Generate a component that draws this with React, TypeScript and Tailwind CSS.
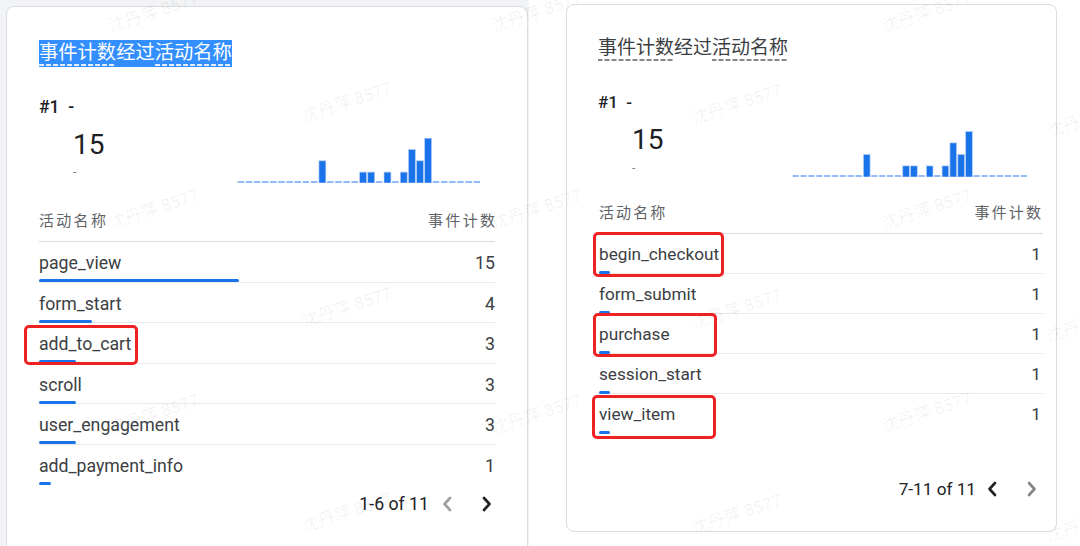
import React from "react";

type Row = { name: string; value: number; bar: number };

function Spark({ w, h, unit, values }: { w: number; h: number; unit: number; values: Record<number, number> }) {
  const slots = 30;
  const sw = w / slots;
  return (
    <svg width={w} height={h} className="block">
      {Array.from({ length: slots }).map((_, i) => {
        const v = values[i] || 0;
        const x = i * sw;
        if (!v) return <rect key={i} x={x + 0.6} y={h - 1.8} width={sw - 1.6} height={1.6} fill="#7baaf7" />;
        const bh = v * unit;
        return (
          <rect key={i} x={x + 0.6} y={h - bh + 0.4} width={sw - 1.2} height={bh - 0.4} fill="#1a73e8" stroke="#b3cefb" strokeWidth={0.7} />
        );
      })}
    </svg>
  );
}

function ChevLeft({ color }: { color: string }) {
  return (
    <svg width="10" height="16" viewBox="0 0 10 16" className="block">
      <polyline points="8,2 2.5,8 8,14" fill="none" stroke={color} strokeWidth="2.6" strokeLinecap="round" strokeLinejoin="round" />
    </svg>
  );
}
function ChevRight({ color }: { color: string }) {
  return (
    <svg width="10" height="16" viewBox="0 0 10 16" className="block">
      <polyline points="2,2 7.5,8 2,14" fill="none" stroke={color} strokeWidth="2.6" strokeLinecap="round" strokeLinejoin="round" />
    </svg>
  );
}

const dashGray =
  "bg-[linear-gradient(to_right,#80868b_65%,transparent_65%)] bg-[length:7px_2px] bg-bottom bg-repeat-x";
const dashWhite =
  "bg-[linear-gradient(to_right,#e3eeff_65%,transparent_65%)] bg-[length:7px_2px] bg-bottom bg-repeat-x";

function Title({ selected }: { selected: boolean }) {
  const dash = selected ? dashWhite : dashGray;
  return (
    <div
      className={
        "inline-block pt-[1px] pb-[2px] leading-[24px] " +
        (selected ? "bg-[#338fff] text-white text-[19.3px]" : "text-[#3c4043] text-[19px]")
      }
    >
      <span className={"pb-[2px] " + dash}>事件计数</span>
      <span>经过</span>
      <span className={"pb-[2px] " + dash}>活动名称</span>
    </div>
  );
}

const leftRows: Row[] = [
  { name: "page_view", value: 15, bar: 200 },
  { name: "form_start", value: 4, bar: 53 },
  { name: "add_to_cart", value: 3, bar: 37 },
  { name: "scroll", value: 3, bar: 37 },
  { name: "user_engagement", value: 3, bar: 37 },
  { name: "add_payment_info", value: 1, bar: 12 },
];

const rightRows: Row[] = [
  { name: "begin_checkout", value: 1, bar: 11 },
  { name: "form_submit", value: 1, bar: 11 },
  { name: "purchase", value: 1, bar: 11 },
  { name: "session_start", value: 1, bar: 11 },
  { name: "view_item", value: 1, bar: 11 },
];

const leftChart = { 10: 2, 15: 1, 16: 1, 18: 1, 20: 1, 21: 3, 22: 2, 23: 4 };
const rightChart = { 9: 2, 14: 1, 15: 1, 17: 1, 19: 1, 20: 3, 21: 2, 22: 4 };

const marks: [number, number][] = [
  [107, 0], [490, 0], [880, 0],
  [-90, 95], [300, 90], [690, 92], [1045, 105],
  [107, 197], [490, 197], [880, 197],
  [-90, 300], [300, 295], [690, 297], [1045, 310],
  [107, 402], [490, 402], [880, 400],
  [-90, 505], [300, 500], [690, 502], [1045, 510],
];

export default function App() {
  return (
    <div className="relative w-[1080px] h-[546px] overflow-hidden bg-white flex font-['Roboto','Noto_Sans_CJK_SC',sans-serif]">
      {/* Left screenshot */}
      <div className="w-[529px] h-full bg-[#f1f3f4] pl-[6px] pt-[6px] shrink-0">
        <div className="relative w-[522px] h-[560px] rounded-[8px] border border-[#dadce0] bg-white pl-[32px] pr-[32px] pt-[33px]">
          <Title selected />
          <div className="flex h-[135px]">
            <div className="w-[198px] shrink-0">
              <div className="mt-[28px] text-[17.5px] leading-[24px] font-medium text-[#202124]">
                #1&nbsp;&nbsp;-
              </div>
              <div className="mt-[9px] ml-[34px] text-[28px] leading-[34px] text-[#202124]">15</div>
              <div className="mt-[3px] ml-[34px] text-[12px] leading-[14px] text-[#80868b]">-</div>
            </div>
            <div className="mt-[66px]">
              <Spark w={244} h={50} unit={11.3} values={leftChart} />
            </div>
          </div>
          <div className="h-[40px] flex items-center justify-between border-b border-[#dadce0] text-[15px] tracking-[2.3px] text-[#5f6368]">
            <span>活动名称</span>
            <span className="-mr-[2.3px]">事件计数</span>
          </div>
          {leftRows.map((r, i) => (
            <div
              key={r.name}
              className={
                "h-[40.5px] pt-[10px] " + (i < leftRows.length - 1 ? "border-b border-[#e8eaed]" : "")
              }
            >
              <div className="flex justify-between text-[17.7px] leading-[22px] text-[#3c4043]">
                <span>{r.name}</span>
                <span>{r.value}</span>
              </div>
              <div className="mt-[5px] h-[3px] rounded-full bg-[#1a73e8]" style={{ width: r.bar }} />
            </div>
          ))}
          <div className="mt-[7px] flex items-center justify-end text-[17.7px] leading-[24px] text-[#202124]">
            <span>1-6 of 11</span>
            <span className="ml-[13px]">
              <ChevLeft color="#9aa0a6" />
            </span>
            <span className="ml-[30px] mr-[3px]">
              <ChevRight color="#202124" />
            </span>
          </div>
          <div className="absolute left-[17px] top-[318px] w-[114px] h-[40px] rounded-[5px] border-[3px] border-[#ee2222]" />
        </div>
      </div>

      {/* Right screenshot */}
      <div className="flex-1 h-full pl-[37px] pt-[4px] bg-white">
        <div className="relative w-[491px] h-[528px] rounded-[8px] border border-[#dadce0] bg-white pl-[31px] pr-[13px] pt-[30px]">
          <Title selected={false} />
          <div className="flex h-[132px]">
            <div className="w-[194px] shrink-0">
              <div className="mt-[28px] text-[17px] leading-[24px] font-medium text-[#202124]">
                #1&nbsp;&nbsp;-
              </div>
              <div className="mt-[9px] ml-[34px] text-[28px] leading-[34px] text-[#202124]">15</div>
              <div className="mt-[4px] ml-[34px] text-[12px] leading-[14px] text-[#80868b]">-</div>
            </div>
            <div className="mt-[65px]">
              <Spark w={236} h={50} unit={11.5} values={rightChart} />
            </div>
          </div>
          <div className="h-[40px] flex items-center justify-between border-b border-[#dadce0] text-[15px] tracking-[2.1px] text-[#5f6368]">
            <span className="ml-[1px]">活动名称</span>
            <span>事件计数</span>
          </div>
          {rightRows.map((r, i) => (
            <div
              key={r.name}
              className={"h-[40px] pt-[9px] " + (i < rightRows.length - 1 ? "border-b border-[#e8eaed]" : "")}
            >
              <div className="flex justify-between text-[17.2px] leading-[22px] text-[#3c4043]">
                <span className="ml-[1px]">{r.name}</span>
                <span className="mr-[2px]">{r.value}</span>
              </div>
              <div className="mt-[6px] ml-[1px] h-[3px] rounded-full bg-[#1a73e8]" style={{ width: r.bar }} />
            </div>
          ))}
          <div className="mt-[43px] flex items-center justify-end text-[17.2px] leading-[24px] text-[#202124]">
            <span>7-11 of 11</span>
            <span className="ml-[11px]">
              <ChevLeft color="#202124" />
            </span>
            <span className="ml-[30px] mr-[6px]">
              <ChevRight color="#80868b" />
            </span>
          </div>
          <div className="absolute left-[26px] top-[227px] w-[131px] h-[45px] rounded-[5px] border-[3px] border-[#ee2222]" />
          <div className="absolute left-[26px] top-[308px] w-[124px] h-[44px] rounded-[5px] border-[3px] border-[#ee2222]" />
          <div className="absolute left-[25px] top-[390px] w-[124px] h-[44px] rounded-[5px] border-[3px] border-[#ee2222]" />
        </div>
      </div>

      {/* Watermarks */}
      {marks.map(([x, y], i) => (
        <div
          key={i}
          className="absolute pointer-events-none whitespace-nowrap text-[17px] text-black/[0.06] -rotate-[18deg]"
          style={{ left: x, top: y }}
        >
          沈丹萍 8577
        </div>
      ))}
    </div>
  );
}
